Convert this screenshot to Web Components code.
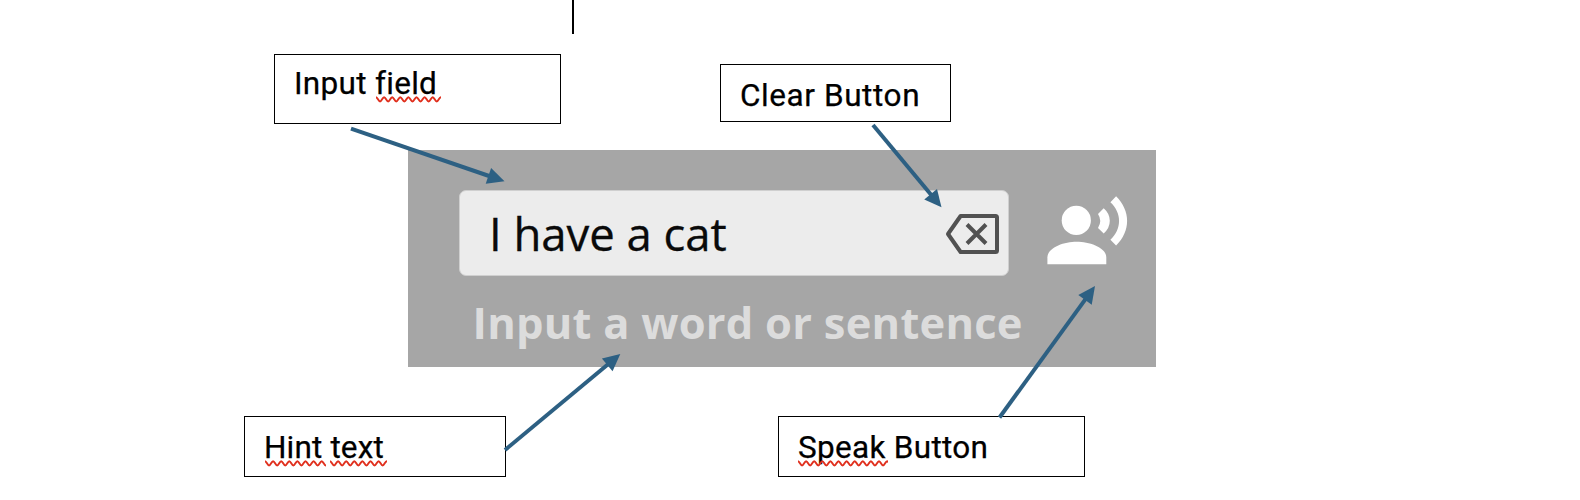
<!DOCTYPE html>
<html lang="en">
<head>
<meta charset="utf-8">
<title>Speech input diagram</title>
<style>
body{margin:0;background:#fff;overflow:hidden}
</style>
</head>
<body>
<annotated-diagram></annotated-diagram>
<script>
function define(name, html, setup) {
  const tpl = document.createElement('template');
  tpl.innerHTML = html.replace(/\n/g, '');
  customElements.define(name, class extends HTMLElement {
    constructor() {
      super();
      this.attachShadow({mode: 'open'}).appendChild(tpl.content.cloneNode(true));
    }
    connectedCallback() { if (setup) setup(this, this.shadowRoot); }
  });
}

/* A word with a wavy spelling mark below it */
define('spell-mark', `
<style>
:host{display:inline-block;position:relative}
svg{position:absolute;left:var(--mark-x,0);top:30px;width:var(--mark-width,100%);height:7px;overflow:hidden}
</style><slot></slot><svg aria-hidden="true"><path fill="none" stroke="#e0301e" stroke-width="1.9"/></svg>`,
(el, root) => {
  let d = 'M0 1.2';
  for (let x = 0; x < 120; x += 8.1) d += `C${x+1.6} 1.2 ${x+2.4} 5.5 ${x+4.05} 5.5S${x+6.5} 1.2 ${x+8.1} 1.2`;
  root.querySelector('path').setAttribute('d', d);
});

define('call-out', `
<style>
:host{display:block;box-sizing:border-box;border:1px solid #000;background:#fff;padding:var(--pad-top,0) 0 0 19px;
font:31.5px/36px Roboto,"Liberation Sans",sans-serif;color:#000;white-space:pre;letter-spacing:var(--spacing,0);
-webkit-text-stroke:.25px #000}
</style><slot></slot>`);

define('clear-icon', `
<style>:host{display:block;width:54px;height:42px;margin-top:2px}svg{display:block}</style>
<svg width="54" height="42" viewBox="0 0 54 42" fill="none" stroke="#515151" stroke-width="4">
<path d="M15.6 3H50.5Q52 3 52 4.5V37.5Q52 39 50.5 39H15.6L3 21Z" stroke-linejoin="round"/><path d="M22 11.5l19 19M41 11.5l-19 19" stroke-width="4"/></svg>`);

define('speak-icon', `
<style>:host{display:block;width:89px;height:89px}svg{display:block}</style>
<svg width="89" height="89" viewBox="0 0 89 89" fill="#fff"><circle cx="33.3" cy="34.4" r="14.6"/>
<path d="M4.4 78.2V71.5C4.4 61.5 21 55.8 33.7 55.8S63.3 61.5 63.3 71.5V78.2Z"/>
<path d="M55 28L60.7 22.2Q66.8 27.5 66.8 34.8T60.7 47.5L55 42Q59.5 34.8 55 28Z"/>
<path d="M67.4 16.2L73.1 10.2C87.8 25 87.8 45 73.1 59.6L67.4 53.8C79 43 79 27 67.4 16.2Z"/></svg>`);

define('text-entry', `
<style>
:host{display:flex;align-items:center;justify-content:space-between;box-sizing:border-box;width:550px;height:86px;
padding:0 9px 0 29px;border:1px solid #cfcfcf;border-radius:7px;background:#ececec;
font:45.5px/60px "Open Sans","Noto Sans",sans-serif;color:#0a0a0a;white-space:pre;-webkit-text-stroke:.3px #0a0a0a;letter-spacing:-.05px}
</style><span><slot></slot></span><clear-icon></clear-icon>`);

define('speech-panel', `
<style>
:host{display:grid;grid-template-rows:86px auto;box-sizing:border-box;width:748px;height:217px;background:#a6a6a6;padding:40px 0 0 51px}
.row{display:flex;gap:34px}
speak-icon{margin-top:-4px}
.hint{padding:17px 0 0 13.5px;font:bold 43.5px/60px "Open Sans","Noto Sans",sans-serif;color:#dcdcdc;white-space:pre;letter-spacing:.23px}
</style>
<div class="row"><text-entry>I have a cat</text-entry><speak-icon></speak-icon></div>
<div class="hint">Input a word or sentence</div>`);

define('arrow-layer', `
<style>:host{display:block;pointer-events:none}svg{display:block}</style>
<svg width="1580" height="500" stroke="#2d6083" stroke-width="4" fill="none"></svg>`,
(el, root) => {
  const svg = root.querySelector('svg');
  [[351,128.7,504.5,181.3],[873,125,941.5,207.3],[505,450,620.3,354],[999.5,417.5,1095,286]].forEach(([x1,y1,x2,y2]) => {
    const L = Math.hypot(x2-x1, y2-y1), g = document.createElementNS('http://www.w3.org/2000/svg','g');
    g.setAttribute('transform', `translate(${x1} ${y1}) rotate(${Math.atan2(y2-y1,x2-x1)*180/Math.PI})`);
    g.innerHTML = `<path d="M0 0H${L-14}"/><path d="M${L-17} -8.3L${L} 0L${L-17} 8.3Z" fill="#2d6083" stroke="none"/>`;
    svg.appendChild(g);
  });
});

define('annotated-diagram', `
<style>
:host{display:block;position:relative;width:1580px;height:500px;background:#fff}
call-out,speech-panel,arrow-layer,.caret{position:absolute}
.caret{left:572px;top:0;width:2px;height:34px;background:#000}
speech-panel{left:408px;top:150px}
.a{left:274px;top:54px;width:287px;height:70px;--pad-top:11px;--spacing:.3px}
.b{left:720px;top:64px;width:231px;height:58px;--pad-top:13px;--spacing:.58px}
.c{left:244px;top:416px;width:262px;height:61px;--pad-top:13px;--spacing:.15px}
.d{left:778px;top:416px;width:307px;height:61px;--pad-top:13px;--spacing:.3px}
arrow-layer{left:0;top:0}
</style>
<div class="caret"></div>
<speech-panel></speech-panel>
<call-out class="a">Input <spell-mark style="--mark-width:65px;--mark-x:1px">field</spell-mark></call-out>
<call-out class="b">Clear Button</call-out>
<call-out class="c"><spell-mark style="--mark-width:61px;--mark-x:.5px">Hint</spell-mark> <spell-mark style="--mark-width:57px">text</spell-mark></call-out>
<call-out class="d"><spell-mark style="--mark-width:90px">Speak</spell-mark> Button</call-out>
<arrow-layer></arrow-layer>`);
</script>
</body>
</html>
